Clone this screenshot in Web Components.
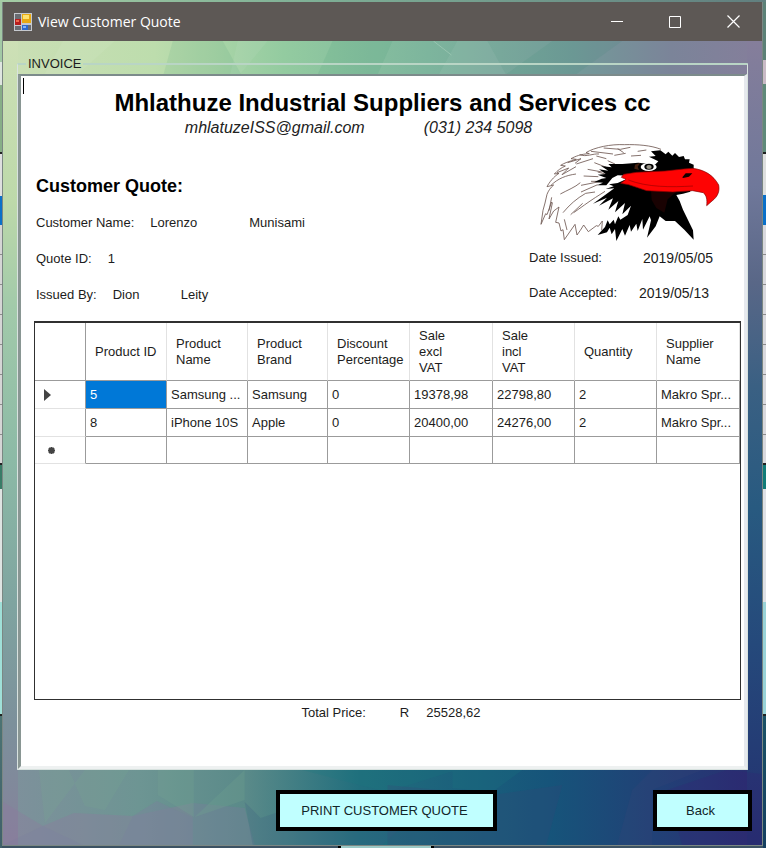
<!DOCTYPE html>
<html lang="en">
<head>
<meta charset="utf-8">
<meta name="viewport" content="width=device-width, initial-scale=1">
<title>View Customer Quote</title>
<style>
  html, body { margin: 0; }
  body { font: 13px/16px "Liberation Sans", Arial, sans-serif; color: #1c1c20; background: #3f6169; }
</style>
</head>
<body>
<desk-backdrop>
  <app-window caption="View Customer Quote">
    <group-box caption="INVOICE">
      <invoice-heading company="Mhlathuze Industrial Suppliers and Services cc" email="mhlatuzeISS@gmail.com" phone="(031) 234 5098"></invoice-heading>
      <quote-details>
        <invoice-field label="Customer Name:" first="Lorenzo" second="Munisami" style="--first:99px"></invoice-field>
        <invoice-field label="Quote ID:" first="1"></invoice-field>
        <invoice-field label="Issued By:" first="Dion" second="Leity" style="--first:68px"></invoice-field>
        <invoice-field slot="dates" label="Date Issued:" first="2019/05/05" style="--label:98px;--value-size:14px"></invoice-field>
        <invoice-field slot="dates" label="Date Accepted:" first="2019/05/13" style="--label:94px;--value-size:14px"></invoice-field>
      </quote-details>
      <product-grid></product-grid>
      <total-line label="Total Price:" currency="R" amount="25528,62"></total-line>
    </group-box>
    <action-button slot="actions" style="--width:221px">PRINT CUSTOMER QUOTE</action-button>
    <action-button slot="actions" style="--width:99px">Back</action-button>
  </app-window>
</desk-backdrop>

<script>
function define(name, render) {
  customElements.define(name, class extends HTMLElement {
    connectedCallback() {
      if (this.shadowRoot) return;
      const t = document.createElement('template');
      t.innerHTML = render(n => this.getAttribute(n) || '');
      this.attachShadow({ mode: 'open' }).append(t.content.cloneNode(true));
    }
  });
}

define('desk-backdrop', () => `
<style>
  :host {
    display: flex; min-height: 100vh; box-sizing: border-box; padding: 2px 3px 2px 2px;
    background:
      linear-gradient(90deg, #000 0 3px, #9bc9c6 3px 93px, #000 93px) 338px 100% / 96px 2px no-repeat,
      linear-gradient(90deg, #a5cda5, #7fb096 40%, #617f7f) 0 0 / 100% 2px no-repeat,
      repeating-linear-gradient(#0000 0 29px, #8b8b8b 29px 30px) 0 225px / 2px 238px no-repeat,
      repeating-linear-gradient(#0000 0 29px, #8b8b8b 29px 30px) 100% 225px / 3px 238px no-repeat,
      linear-gradient(#a2c9a5 62px, #dfe6e0 62px 85px, #87ae87 85px 152px, #222 152px 154px, #dedfdf 154px 196px,
        #0b70c9 196px 225px, #d5d5d5 225px 463px, #222 463px 465px, #397c67 465px 489px, #dfe4e2 489px 602px,
        #9fe0d8 602px 714px, #222 714px 716px, #4c7473 716px, #40606a) 0 0 / 2px 100% no-repeat,
      linear-gradient(#5c8177 60px, #c9bac6 60px 84px, #5f8a7a 84px 152px, #222 152px 154px, #dedfdf 154px 195px,
        #0b70c9 195px 225px, #d9d9de 225px 463px, #222 463px 465px, #117c78 465px 489px, #dfe1e6 489px 602px,
        #99d3d8 602px 714px, #222 714px 716px, #1b5266 716px, #143f60) 100% 0 / 3px 100% no-repeat,
      #3c5263;
  }
</style><slot></slot>`);

define('app-window', a => `
<style>
  :host { flex: 1; min-width: 0; display: flex; flex-direction: column; border: 1px solid #7b8783; border-top: 0; box-sizing: border-box; }
  header { flex: none; height: 39px; display: flex; align-items: center; padding-left: 11px; background: #5d5855; color: #fff; }
  h1 { flex: 1; margin: 0 0 0 6px; font: 14px/20px "Open Sans", "Noto Sans", sans-serif; white-space: nowrap; }
  header button { width: 58px; height: 39px; padding: 0; border: 0; background: none; color: #fff; display: grid; place-items: center; }
  svg { display: block; }
  main {
    position: relative; flex: 1; display: flex; flex-direction: column;
    background:
      linear-gradient(#cde0b6, #bdd9aa 20%, #a2caaa 33%, #8cbaa6 52%, #7fa4a0 70%, #7c909b 85%, #85829b) 0 0 / 15px 100% no-repeat,
      linear-gradient(#857e9b, #70789a 18%, #596787 30%, #3a6083 43%, #285a80 58%, #25497b 75%, #23306f) 100% 0 / 15px 100% no-repeat,
      linear-gradient(90deg, #cbdfb5, #bdddad 20%, #93cba0 37%, #7db59d 56%, #739b99 75%, #7b8499 88%, #857e9b) 0 0 / 100% 40px no-repeat,
      linear-gradient(90deg, #7f909c, #6d9593 18%, #5a8a89 32%, #216e7d 47%, #16547a 72%, #243b75 90%, #292c70);
  }
  .facets { position: absolute; left: 0; bottom: 0; width: 100%; height: 75px; opacity: .6; }
  .rays { position: absolute; left: 0; top: 0; width: 100%; height: 36px; opacity: .7; }
  ::slotted(*) { position: relative; }
  footer { display: flex; justify-content: flex-end; gap: 156px; padding: 20px 10px 14px; }
</style>
<header>
  <svg width="18" height="18" viewBox="0 0 18 18">
    <path fill="#c6c9cf" d="M0 0h18v18H0z"/><path fill="#6a6c72" d="M1 1h6v5H1zM1 13h6v4H1zM14 12h3v5h-3z"/>
    <path fill="#b71d1d" d="M1 6h6v6H1z"/><path fill="#ef6a4e" d="M2 7h3v2H2z"/>
    <path fill="#e8a913" d="M8 1h9v9H8z"/><path fill="#ffe270" d="M9 2h6v4H9z"/>
    <path fill="#2d69ce" d="M8 12h6v5H8z"/><path fill="#82b4f8" d="M9 13h3v2H9z"/>
  </svg>
  <h1>${a('caption')}</h1>
  <button aria-label="Minimize"><svg width="12" height="12"><path d="M0 5.500h12" stroke="#fff"/></svg></button>
  <button aria-label="Maximize"><svg width="12" height="12"><path d="M.5.5h11v11H.5z" fill="none" stroke="#fff"/></svg></button>
  <button aria-label="Close"><svg width="13" height="13"><path d="M.5.5l12 12m0-12l-12 12" stroke="#fff" stroke-width="1.200"/></svg></button>
</header>
<main>
  <svg class="rays" viewBox="0 0 760 36" preserveAspectRatio="none">
    <path fill="#fff" fill-opacity=".09" d="M60 0h52l-40 36H40zM235 0h30l-30 36h-8zM455 0h30l20 36h-70z"/>
    <path fill="#1f8765" fill-opacity=".12" d="M170 0h50l20 36h-80zM330 0h60l-16 36h-60zM550 0h70l-50 36h-70z"/>
    <path stroke="#a4cdb9" d="M431 0l18 14"/>
  </svg>
  <svg class="facets" viewBox="0 0 760 75" preserveAspectRatio="none">
    <path fill="#8d7b9e" fill-opacity=".6" d="M0 32l40 24 31-13 59 3 60-13 0 42H0z"/>
    <path fill="#8079a0" fill-opacity=".5" d="M190 75V33l52 5 10 37zM0 75l40-19 40 19zM130 46l24-15 36 17 6 27h-80z"/>
    <path fill="#79ad91" fill-opacity=".35" d="M36 0l6 53L82 0zM66 0h60l-24 40-20-4zM155 0h36v47l-36-22zM192 47l50-17V0z"/>
    <path fill="#3d5f82" fill-opacity=".4" d="M242 32l16 16 60-20 80 30-18 17H250z"/>
    <path fill="#1a7a80" fill-opacity=".35" d="M300 0h154l-70 22zM450 0h70l-30 22-40-4z"/>
    <path fill="#394577" fill-opacity=".4" d="M385 75l0-60 105 10 70-10-16 60zM630 20l20-20h50l-50 20v55h-35z"/>
    <path fill="#381f76" fill-opacity=".35" d="M665 20l60-20 35 4v71h-80z"/>
  </svg>
  <slot></slot>
  <footer><slot name="actions"></slot></footer>
</main>`);

define('group-box', a => `
<style>
  :host { flex: 1; display: flex; margin: 14px 14px 0; }
  fieldset { flex: 1; min-width: 0; margin: 0; padding: 0; border: 1px solid #d8e2df; border-top: 2px solid #b9d5c5; border-radius: 1px; display: flex; flex-direction: column; }
  legend { margin-left: 8px; padding: 0 2px; line-height: 18px; }
  .sheet { position: relative; flex: 1; display: flex; flex-direction: column; margin-top: 1px; padding: 14px 3px 45px 13px; background: #fff;
    border: solid; border-width: 2px 3px 3px; border-color: #7c8b8b #e6e9ee #eef1f1 #899693; }
  .sheet::before { content: ""; position: absolute; left: 2px; top: 2px; width: 1px; height: 16px; background: #000; }
</style>
<fieldset><legend>${a('caption')}</legend><div class="sheet"><slot></slot></div></fieldset>`);

define('invoice-heading', a => `
<style>
  :host { display: block; text-align: center; color: #000; }
  h2 { margin: 0 10px 0 0; font-size: 24px; line-height: 26px; white-space: nowrap; }
  p { margin: 0; padding-right: 58px; display: flex; justify-content: center; gap: 59px; font: italic 16px/24px "Liberation Sans", Arial, sans-serif; color: #222; }
</style>
<h2>${a('company')}</h2><p><span>${a('email')}</span><span>${a('phone')}</span></p>`);

define('quote-details', () => `
<style>
  :host { display: flex; justify-content: space-between; }
  h3 { margin: 0 0 19px; font-size: 18px; line-height: 20px; color: #000; }
  .left { padding: 36px 0 0 2px; display: flex; flex-direction: column; }
  .rows { display: flex; flex-direction: column; gap: 20px; }
  .right { width: 195px; padding-right: 17px; }
  .dates { display: flex; flex-direction: column; gap: 19px; margin-top: 4px; }
  eagle-logo { margin-left: 12px; }
</style>
<div class="left"><h3>Customer Quote:</h3><div class="rows"><slot></slot></div></div>
<div class="right"><eagle-logo></eagle-logo><div class="dates"><slot name="dates"></slot></div></div>`);

define('invoice-field', a => `
<style>
  :host { display: flex; gap: 16px; white-space: nowrap; line-height: 16px; }
  .label { min-width: var(--label, 0); }
  .first { min-width: var(--first, 0); margin-right: -16px; font-size: var(--value-size, 13px); }
</style>
<span class="label">${a('label')}</span><span class="first">${a('first')}</span><span>${a('second')}</span>`);

define('eagle-logo', () => `
<style>:host { display: block; } svg { display: block; width: 182px; height: 106px; overflow: visible; }</style>
<svg viewBox="30 24 546 318" role="img" aria-label="Eagle head">
  <g fill="none" stroke="#6d5750" stroke-width="2.500">
    <path d="M390 52c-30-12-70-15-110-14-40-2-90 8-115 24l10 3c-25 1-42 8-55 15l16 2c-22 6-38 12-47 18l14 2c-12 5-24 14-33 24l14-2c-16 10-30 28-36 40l20-5c-10 8-16 18-20 28l-6 26-6 22-6 42 14-32 4 3 14-38 2 3-10 48 14-24 16-12-10 46 10 2 6 24 6-4 4 30 32-46 6 32 10-14 10-16 14 20 24-18 6 2 12-16-2 28"/>
    <path d="M60 160c20-20 45-30 75-34M78 122l35-14-20 20 42-24M110 92l40-12-18 14M146 68c20 8 40-4 58-2M136 96l50-16M180 58l66 8M218 48l50 4 30-6M250 70l34-6M300 72l30-2M320 58l26-4M96 242c20-24 40-42 68-58l28-4M128 242c20-14 44-32 66-46l28-18M88 186c22-12 44-20 60-34M150 160l60-12M158 132l44 2M170 112l44 8M190 92l36 14M155 214l-36 34M62 196l-8 40M100 262l8 32M150 180l50-22"/>
    <path d="M200 120l38 10M180 148l44 0M230 86l22 10M196 72l30 8M260 50l18 12"/>
  </g>
  <path d="M388 55l16 12 8-8 12 12 8-8 12 12 14-3 4 10 14 0-2 10 14 6 0 12-30 16-60 8-80-2-58-2-16 8-18 22-28 0 18-8-26-2 22-10 14-2-26-10 24-2-20-14 28 4-22-14 32 4-10-10 42 0 48-4 50 6 10-10-28-14 20-2-14-14z"/>
  <path d="M280 144l-20 9-26 4 14 6-24 8 26-2-64 46 42-18-24 24 42-22-14 34 30-26-10 34 30-28-8 34 26-26-10 28-22 14-6-10-10 24-4-14-12 14-6-12-8 20-22 24 28-8 8-14 6 20 10-16 4 36 18-36 8 20 14-32 4 20 16-24 4 22 14-36 2 32 20-40 4 12-12 52 26-34 12-30 18 14 28 0 28 26 28 30-2-28-30-62-10-26-10-18 20-4 22-6-2-20-160-12z"/>
  <path fill="#190202" d="M360 176l78 2-28 24-10 40-24-14-14-24z"/>
  <path fill="#fe0303" stroke="#7e0000" stroke-width="2" d="M278 127l38-6 86-4 55-6 28-2c34 4 62 20 78 50 4 20-4 36-20 48l-16 14c2-18 0-30-10-39l-32-6-60 4-78-4-54-18-24-4 16-12-14-6z"/>
  <path fill="#100" d="M454 136l10-12 20 0-10 10-18 4z"/><path stroke="#9d0000" stroke-width="2" fill="none" d="M292 144c56 22 128 22 194 18"/>
  <ellipse cx="353" cy="105" rx="24" ry="12" fill="#fff"/><ellipse cx="354" cy="104" rx="14" ry="9"/><ellipse cx="354" cy="105" rx="8" ry="6" fill="#99958a"/>
  <path fill="#432010" d="M312 98l16-6-8 12 4 10-14-4z"/>
</svg>`);

define('product-grid', () => {
  const widths = [51, 81, 81, 80, 82, 83, 82, 82];
  const heads = ['Product ID', 'Product<br>Name', 'Product<br>Brand', 'Discount<br>Percentage', 'Sale<br>excl<br>VAT', 'Sale<br>incl<br>VAT', 'Quantity', 'Supplier<br>Name'];
  const rows = [
    ['<svg width="7" height="12"><path fill="#444" d="M0 0l7 6-7 6z"/></svg>', '5', 'Samsung ...', 'Samsung', '0', '19378,98', '22798,80', '2', 'Makro Spr...'],
    ['', '8', 'iPhone 10S', 'Apple', '0', '20400,00', '24276,00', '2', 'Makro Spr...'],
    ['<svg width="13" height="7"><path stroke="#444" stroke-width="2" d="M7.500 0v7M4 3.500h7M5 1l5 5M10 1l-5 5"/></svg>', '', '', '', '', '', '', '', '']
  ];
  return `
<style>
  :host { flex: 1; display: block; margin-top: 18px; padding: 0; border: 1px solid #303030; border-top-width: 2px; }
  table { width: 100%; table-layout: fixed; border-collapse: separate; border-spacing: 0; }
  th, td { box-sizing: border-box; font-weight: normal; text-align: left; white-space: nowrap; border: 0 solid #9b9b9b; border-width: 0 1px 1px 0; }
  thead th { height: 58px; padding: 0 0 0 9px; border-right-color: #e2e2e2; line-height: 16px; }
  thead th:first-child, tbody th { border-right-color: #9b9b9b; }
  tbody th { border-bottom-color: #e2e2e2; padding: 0 0 0 9px; }
  tbody th svg { display: block; }
  td { height: 28px; padding: 0 0 0 4px; }
  tbody tr:last-child > * { height: 27px; }
  .on { background: #0078d7; color: #fff; }
</style>
<table><colgroup>${widths.map(w => `<col style="width:${w}px">`).join('')}<col></colgroup>
<thead><tr><th></th>${heads.map(h => `<th scope="col">${h}</th>`).join('')}</tr></thead>
<tbody>${rows.map((r, i) => `<tr>${r.map((c, j) => j ? `<td${i === 0 && j === 1 ? ' class="on"' : ''}>${c}</td>` : `<th>${c}</th>`).join('')}</tr>`).join('')}</tbody></table>`;
});

define('total-line', a => `
<style>:host { display: flex; justify-content: center; padding: 5px 0 0 7px; line-height: 16px; } .cur { margin: 0 17px 0 34px; }</style>
<span>${a('label')}</span><span class="cur">${a('currency')}</span><output>${a('amount')}</output>`);

define('action-button', () => `
<style>
  :host { display: block; width: var(--width); }
  button { width: 100%; height: 41px; padding: 0 4px 0 0; border: 4px solid #000; background: #c0ffff; color: #12262a; font: inherit; white-space: nowrap; }
</style><button><slot></slot></button>`);
</script>
</body>
</html>
